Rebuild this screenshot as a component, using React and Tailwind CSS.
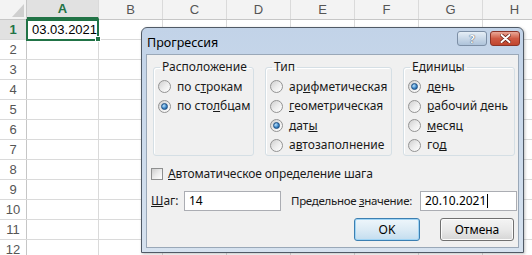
import React from "react";

const cols = [
	{ name: "A", w: "w-[72px]" },
	{ name: "B", w: "w-[64px]" },
	{ name: "C", w: "w-[64px]" },
	{ name: "D", w: "w-[64px]" },
	{ name: "E", w: "w-[64px]" },
	{ name: "F", w: "w-[64px]" },
	{ name: "G", w: "w-[64px]" },
	{ name: "H", w: "w-[64px]" },
];

const rows = [1, 2, 3, 4, 5, 6, 7, 8, 9, 10, 11, 12];

// Windows 7 style radio
const Radio = ({ checked }) => (
	<span className="inline-flex h-[13px] w-[13px] shrink-0 items-center justify-center rounded-full border border-[#939393] bg-linear-to-br from-[#cfcfcf] via-[#ececec] to-[#ffffff]">
		{checked && (
			<span className="h-[7px] w-[7px] rounded-full border border-[#1f4f82] bg-[radial-gradient(circle_at_35%_35%,#bfe3fb,#3b86c8_55%,#1c4f86)]" />
		)}
	</span>
);

const RadioRow = ({ checked, children }) => (
	<div className="flex h-[19.5px] items-center gap-[6px] whitespace-nowrap">
		<Radio checked={checked} />
		<span>{children}</span>
	</div>
);

const Group = ({ title, width, children }) => (
	<fieldset
		className={`${width} h-[97px] shrink-0 rounded-[3px] border border-[#d5dfe5] pl-[4px] shadow-[inset_1px_1px_0_#fff]`}
	>
		<legend className="ml-[2px] px-[2px] leading-[16px]">{title}</legend>
		<div className="pt-[2px]">{children}</div>
	</fieldset>
);

const Sheet = () => (
	<div className="flex flex-col font-['Liberation_Sans',Arial,sans-serif] text-[13px] text-[#444]">
		{/* column headers */}
		<div className="flex h-[20px] shrink-0 border-b border-[#c6c6c6] bg-[#f3f3f3]">
			<div className="relative w-[27px] shrink-0 border-r border-[#c6c6c6]">
				<svg className="absolute left-[12px] top-[4px]" width="12" height="13" viewBox="0 0 12 13">
					<polygon points="12,0 12,13 0,13" fill="#cfcfcf" />
				</svg>
			</div>
			{cols.map((c) => (
				<div
					key={c.name}
					className={`${c.w} shrink-0 border-r border-[#dadada] flex items-center justify-center ${
						c.name === "A"
							? "bg-[#e1e1e1] font-bold text-[#217346] border-b-2 border-b-[#217346]"
							: "text-[#555]"
					}`}
				>
					{c.name}
				</div>
			))}
		</div>
		{rows.map((r) => (
			<div key={r} className="flex h-[20px] shrink-0 border-b border-[#dadada]">
				<div
					className={`w-[27px] shrink-0 border-r flex items-center justify-center leading-none ${
						r === 1
							? "bg-[#e1e1e1] font-bold text-[#217346] border-r-[#217346]"
							: "bg-white text-[#555] border-[#c6c6c6]"
					}`}
				>
					{r}
				</div>
				{cols.map((c) => (
					<div
						key={c.name}
						className={`${c.w} shrink-0 border-r border-[#dadada] flex items-center pl-[5px] text-black`}
					>
						{r === 1 && c.name === "A" ? "03.03.2021" : ""}
					</div>
				))}
			</div>
		))}
		{/* selected cell */}
		<div className="absolute left-[26px] top-[19px] h-[22px] w-[73px] border-2 border-[#217346]" />
		<div className="absolute left-[95px] top-[36px] h-[6px] w-[6px] border border-white bg-[#217346]" />
	</div>
);

const Dialog = () => (
	<div className="absolute left-[141px] top-[27px] flex h-[226px] w-[383px] flex-col rounded-t-[6px] border border-[#505a66] bg-linear-to-b from-[#c2d3e8] to-[#d6e2ef] font-['Noto_Sans',sans-serif] text-[12px] text-[#1a1a1a] shadow-[1px_1px_3px_rgba(0,0,0,0.25)]">
		{/* title bar */}
		<div className="flex h-[26px] items-start">
			<span className="ml-[5px] mt-[6px] text-[12.5px] text-black">Прогрессия</span>
			<div className="ml-auto mr-[3px] mt-[3px] flex gap-[3px]">
				<div className="flex h-[15px] w-[30px] items-center justify-center rounded-[3px] border border-[#7d8fa6] bg-linear-to-b from-[#e6eef6] via-[#c9d8e8] to-[#aec3da] text-[11px] font-bold leading-none text-white [text-shadow:0_0_1px_#3b4c62,0_0_1px_#3b4c62]">
					?
				</div>
				<div className="flex h-[15px] w-[30px] items-center justify-center rounded-[3px] border border-[#8b3328] bg-linear-to-b from-[#e9a898] via-[#cf5a44] to-[#c0452e]">
					<svg width="11" height="9" viewBox="0 0 11 9">
						<path d="M1.5 1 L9.5 8 M9.5 1 L1.5 8" stroke="#6b2218" strokeWidth="3.6" strokeLinecap="round" />
						<path d="M1.5 1 L9.5 8 M9.5 1 L1.5 8" stroke="#fff" strokeWidth="2" strokeLinecap="round" />
					</svg>
				</div>
			</div>
		</div>

		{/* client area */}
		<div className="mx-[4px] mb-[4px] flex-1 border border-[#9aa8b8] bg-[#f0f0f0] pl-[4px] pr-[1px] pt-[4px]">
			<div className="ml-[2px] flex gap-[12px]">
				<Group title="Расположение" width="w-[101px]">
					<RadioRow>
						по с<u>т</u>рокам
					</RadioRow>
					<RadioRow checked>
						по сто<u>л</u>бцам
					</RadioRow>
				</Group>
				<div className="-ml-px flex gap-[11px]">
					<Group title="Тип" width="w-[127px]">
						<RadioRow>
							ар<u>и</u>фметическая
						</RadioRow>
						<RadioRow>
							<u>г</u>еометрическая
						</RadioRow>
						<RadioRow checked>
							дат<u>ы</u>
						</RadioRow>
						<RadioRow>
							а<u>в</u>тозаполнение
						</RadioRow>
					</Group>
					<Group title="Единицы" width="w-[112px]">
						<RadioRow checked>
							д<u>е</u>нь
						</RadioRow>
						<RadioRow>
							<u>р</u>абочий день
						</RadioRow>
						<RadioRow>
							<u>м</u>есяц
						</RadioRow>
						<RadioRow>
							го<u>д</u>
						</RadioRow>
					</Group>
				</div>
			</div>

			{/* auto step */}
			<div className="mt-[8px] flex h-[20px] items-center gap-[5px]">
				<span className="h-[12px] w-[12px] border border-[#8e8f8f] bg-linear-to-br from-[#cdcdcd] via-[#ebebeb] to-[#ffffff]" />
				<span className="tracking-[-0.1px]">
					<u>А</u>втоматическое определение шага
				</span>
			</div>

			{/* step + limit */}
			<div className="mt-[7px] flex h-[20px] items-center whitespace-nowrap">
				<span className="w-[33px] shrink-0">
					<u>Ш</u>аг:
				</span>
				<div className="flex h-[20px] w-[97px] shrink-0 items-center border border-[#abadb3] bg-white pl-[4px] text-black">
					14
				</div>
				<span className="ml-[10px] w-[129px] shrink-0 text-[11.5px] tracking-[-0.3px]">
					Предельное <u>з</u>начение:
				</span>
				<div className="flex h-[20px] w-[97px] shrink-0 items-center border border-[#abadb3] bg-white pl-[4px] text-black">
					20.10.2021
					<span className="ml-px h-[14px] w-px bg-black" />
				</div>
			</div>

			{/* buttons */}
			<div className="mt-[7px] flex justify-end gap-[20px] pr-[3px]">
				<div className="flex h-[23px] w-[66px] items-center justify-center rounded-[3px] border border-[#3c7fb1] bg-linear-to-b from-[#eef6fb] via-[#dcebf5] to-[#c3ddef] shadow-[inset_0_0_0_1px_#9fd4f5] text-black">
					OK
				</div>
				<div className="flex h-[23px] w-[74px] items-center justify-center rounded-[3px] border border-[#707070] bg-linear-to-b from-[#f4f4f4] via-[#e9e9e9] to-[#d5d5d5] shadow-[inset_0_0_0_1px_#fbfbfb] text-black">
					Отмена
				</div>
			</div>
		</div>
	</div>
);

export default function App() {
	return (
		<div className="relative h-[255px] w-[532px] overflow-hidden bg-white">
			<Sheet />
			<Dialog />
		</div>
	);
}
